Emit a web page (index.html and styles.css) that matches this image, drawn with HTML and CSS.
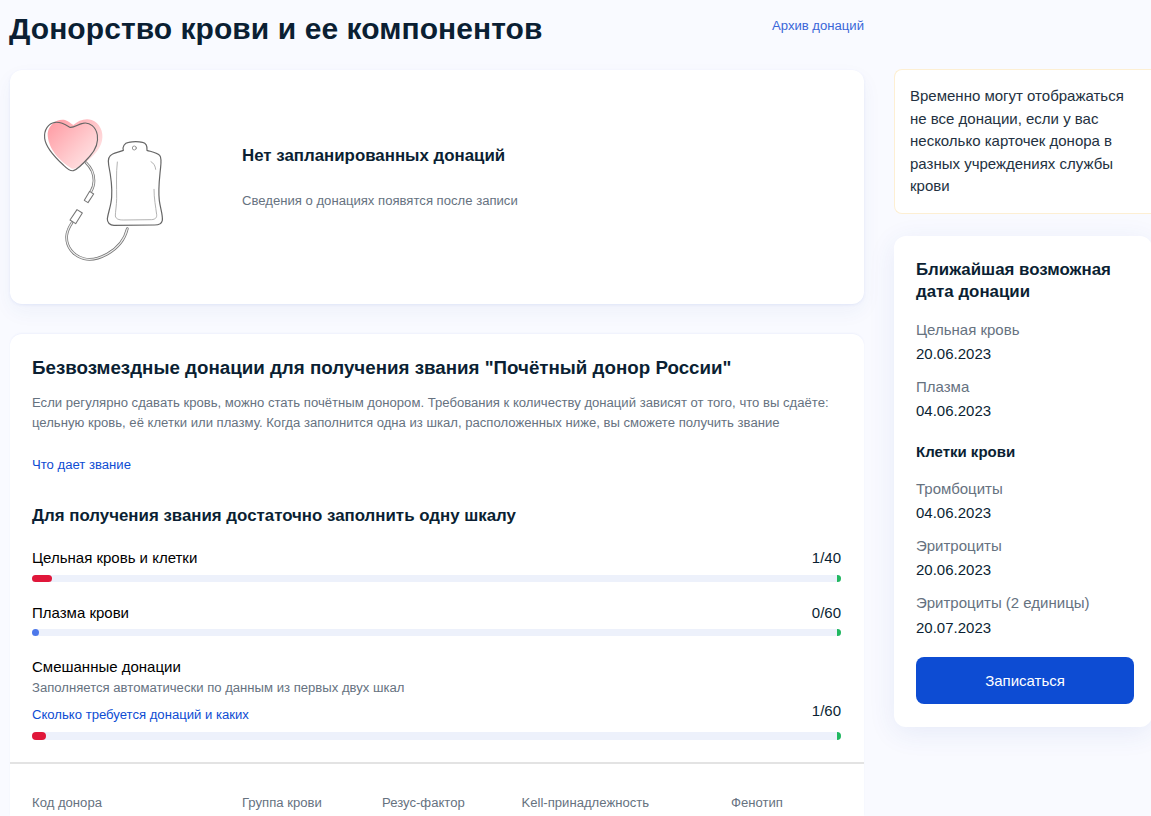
FILE: index.html
```html
<!DOCTYPE html>
<html lang="ru">
<head>
<meta charset="utf-8">
<title>Донорство крови и ее компонентов</title>
<link rel="stylesheet" href="styles.css">
</head>
<body>
<div class="page">
  <main class="main">
    <header class="head">
      <h1>Донорство крови и ее компонентов</h1>
      <a class="archive" href="#">Архив донаций</a>
    </header>
    <section class="card empty">
      <svg class="pic" width="200" height="220" viewBox="0 0 600 660" fill="none" stroke-linecap="round" stroke-linejoin="round">
        <defs>
          <linearGradient id="hg" x1="0.05" y1="0.1" x2="0.95" y2="0.9">
            <stop offset="0" stop-color="#ff9ea6"/>
            <stop offset="0.6" stop-color="#ffcdd0"/>
            <stop offset="1" stop-color="#ffe9ea"/>
          </linearGradient>
          <filter id="soft" x="-5%" y="-5%" width="110%" height="110%">
            <feGaussianBlur stdDeviation="0.9"/>
          </filter>
        </defs>
        <g filter="url(#soft)">
          <path d="M113 190C116 165 140 145 165 150C175 153 182 160 190 165C205 152 225 144 245 150C268 158 282 185 276 212C270 238 250 260 222 280C212 288 198 298 186 296C150 275 112 235 113 190Z" fill="url(#hg)"/>
          <path d="M180 172C170 166 155 155 135 157C115 160 101 180 104 205C107 230 135 262 160 285C170 295 178 304 190 302C205 298 222 278 240 258C256 240 266 220 262 195C258 172 240 155 218 160C203 163 192 174 180 172Z" stroke="#666" stroke-width="3.4"/>
          <path d="M228 278C243 292 252 310 252 332C252 346 247 358 241 368" stroke="#777" stroke-width="8"/>
          <path d="M228 278C243 292 252 310 252 332C252 346 247 358 241 368" stroke="#eee" stroke-width="3.5"/>
          <path d="M239 364L251 372L234 398L223 391Z" fill="#fff" stroke="#777" stroke-width="3.2"/>
          <path d="M352 476C344 510 322 535 292 552C270 564 245 572 222 566C190 558 168 530 170 498C171 484 178 470 186 458" stroke="#777" stroke-width="8"/>
          <path d="M352 476C344 510 322 535 292 552C270 564 245 572 222 566C190 558 168 530 170 498C171 484 178 470 186 458" stroke="#eee" stroke-width="3.5"/>
          <path d="M201 419L217 429L197 461L180 450Z" fill="#fff" stroke="#777" stroke-width="3.2"/>
          <path d="M340 241C337 230 343 219 356 217C370 214 385 214 398 217C408 219 412 228 411 241C424 245 440 247 449 256C456 264 453 282 451 300C448 330 444 360 448 392C451 415 459 435 457 451C455 462 446 465 434 465L312 466C300 466 291 458 292 446C295 425 304 405 305 380C307 350 302 315 296 285C293 268 296 257 308 252C318 248 330 245 340 241Z" stroke="#666" stroke-width="3.6"/>
          <path d="M322 276C318 310 320 350 320 385C320 405 316 425 316 438C318 447 326 450 340 450L425 449C436 448 441 443 440 434C437 410 432 385 432 358" stroke="#a0a0a0" stroke-width="2.4"/>
          <path d="M423 275C432 280 436 288 437 298" stroke="#a0a0a0" stroke-width="2.4"/>
          <circle cx="373" cy="234" r="6" stroke="#888" stroke-width="2.6"/>
        </g>
      </svg>
      <div class="empty-text">
        <h2>Нет запланированных донаций</h2>
        <p>Сведения о донациях появятся после записи</p>
      </div>
    </section>
    <section class="card honor">
      <div class="honor-body">
        <h2 class="honor-title">Безвозмездные донации для получения звания "Почётный донор России"</h2>
        <p class="honor-desc">Если регулярно сдавать кровь, можно стать почётным донором. Требования к количеству донаций зависят от того, что вы сдаёте: цельную кровь, её клетки или плазму. Когда заполнится одна из шкал, расположенных ниже, вы сможете получить звание</p>
        <a class="link what" href="#">Что дает звание</a>
        <h3 class="scale-title">Для получения звания достаточно заполнить одну шкалу</h3>
        <div class="scale">
          <div class="scale-head"><span>Цельная кровь и клетки</span><span>1/40</span></div>
          <div class="track"><i class="fill red w1"></i><i class="end"></i></div>
        </div>
        <div class="scale scale-plasma">
          <div class="scale-head"><span>Плазма крови</span><span>0/60</span></div>
          <div class="track"><i class="fill blue"></i><i class="end"></i></div>
        </div>
        <div class="scale scale-mixed">
          <div class="mixed-name">Смешанные донации</div>
          <div class="mixed-note">Заполняется автоматически по данным из первых двух шкал</div>
          <div class="scale-head mixed-head"><a class="link" href="#">Сколько требуется донаций и каких</a><span>1/60</span></div>
          <div class="track"><i class="fill red w2"></i><i class="end"></i></div>
        </div>
      </div>
      <div class="facts">
        <span class="f1">Код донора</span>
        <span class="f2">Группа крови</span>
        <span class="f3">Резус-фактор</span>
        <span class="f4">Kell-принадлежность</span>
        <span class="f5">Фенотип</span>
      </div>
    </section>
  </main>
  <aside class="side">
    <div class="notice">Временно могут отображаться не все донации, если у вас несколько карточек донора в разных учреждениях службы крови</div>
    <div class="next">
      <h3>Ближайшая возможная дата донации</h3>
      <dl>
        <dt>Цельная кровь</dt><dd>20.06.2023</dd>
        <dt>Плазма</dt><dd>04.06.2023</dd>
      </dl>
      <h4>Клетки крови</h4>
      <dl>
        <dt>Тромбоциты</dt><dd>04.06.2023</dd>
        <dt>Эритроциты</dt><dd>20.06.2023</dd>
        <dt>Эритроциты (2 единицы)</dt><dd class="last">20.07.2023</dd>
      </dl>
      <button class="btn">Записаться</button>
    </div>
  </aside>
</div>
</body>
</html>
```
FILE: styles.css
```css
html, body { margin: 0; padding: 0; }
body {
  height: 816px;
  overflow: hidden;
  background: #f9faff;
  font-family: "Liberation Sans", Arial, sans-serif;
  color: #0b1f33;
}
.page { display: flex; gap: 30px; padding-left: 10px; width: 1151px; box-sizing: border-box; }
.main { width: 854px; flex: none; }
.side { width: 258px; flex: none; padding-top: 69px; }
.head { display: flex; justify-content: space-between; height: 70px; }
h1 { margin: 11px 0 0 -1px; font-size: 30px; line-height: 36px; font-weight: 700; letter-spacing: .06px; color: #0b1f33; }
.archive { margin-top: 18px; font-size: 13.125px; line-height: 16px; color: #3a66d8; text-decoration: none; }
.card { background: #fff; border-radius: 12px; box-shadow: 0 1px 3px rgba(40, 80, 200, .08), 0 8px 20px rgba(40, 80, 160, .05); }
.empty { height: 234px; display: flex; }
.pic { flex: none; }
.empty-text { margin-left: 32px; padding-top: 76px; }
.empty-text h2 { margin: 0; font-size: 16.875px; line-height: 20px; font-weight: 700; }
.empty-text p { margin: 27px 0 0; font-size: 13.125px; line-height: 16px; color: #66727f; }
.honor { position: relative; margin-top: 30px; height: 482px; border-radius: 12px 12px 0 0; box-shadow: 0 -1px 2px rgba(40, 80, 200, .05); }
.honor-body { padding: 21px 23px 0 22px; height: 430px; box-sizing: border-box; border-bottom: 2px solid #e3e3e3; }
.honor-title { margin: 0; font-size: 18.75px; line-height: 26px; font-weight: 700; }
.honor-desc { margin: 12px 0 0; font-size: 13.125px; line-height: 19.7px; color: #66727f; }
.link { color: #0d4cd3; text-decoration: none; font-size: 13.125px; line-height: 16px; }
.what { display: block; margin-top: 25px; }
.scale-title { margin: 33px 0 0; font-size: 16.875px; line-height: 20px; font-weight: 700; }
.scale { margin-top: 23px; }
.scale-plasma { margin-top: 22px; }
.scale-mixed { margin-top: 22px; }
.scale-head { display: flex; justify-content: space-between; font-size: 15px; line-height: 18px; color: #0b1f33; }
.scale-head span:first-child { color: #000; }
.track { position: relative; height: 7px; margin-top: 8px; background: #edf1fb; border-radius: 4px; }
.scale-plasma .track { margin-top: 7px; }
.fill { position: absolute; left: 0; top: 0; height: 100%; border-radius: 4px; }
.red { background: #e0173a; }
.blue { width: 7px; background: #4d78ea; }
.w1 { width: 20px; }
.w2 { width: 14px; }
.end { position: absolute; right: 0; top: 0; width: 4px; height: 100%; background: #21b860; border-radius: 0 4px 4px 0; }
.mixed-name { font-size: 15px; line-height: 18px; color: #000; }
.mixed-note { margin-top: 4px; font-size: 13.125px; line-height: 16px; color: #66727f; }
.mixed-head { margin-top: 6px; align-items: flex-start; height: 23px; }
.mixed-head .link { margin-top: 5px; }
.scale-mixed .track { margin-top: 7px; height: 8px; }
.facts { display: flex; padding: 31px 0 0 22px; font-size: 13.125px; line-height: 16px; color: #66727f; }
.f1 { width: 210px; }
.f2 { width: 140px; }
.f3 { width: 139.5px; }
.f4 { width: 209.5px; }
.notice {
  box-sizing: border-box; height: 145px; padding: 15px 24px 0 15px;
  background: #fff; border: 1px solid #fdefd3; border-right: 0; border-radius: 8px 0 0 8px;
  font-size: 15px; line-height: 22.5px; color: #233141;
}
.next {
  box-sizing: border-box; margin-top: 22px; height: 491px; padding: 23px 18px 0 22px;
  background: #fff; border-radius: 12px; box-shadow: 0 6px 28px rgba(40, 80, 180, .09);
}
.next h3 { margin: 0; font-size: 16.875px; line-height: 22px; font-weight: 700; }
.next h4 { margin: 21px 0 0; font-size: 15px; line-height: 20px; font-weight: 700; }
dl { margin: 0; }
.next dt { margin-top: 13px; font-size: 15px; line-height: 20px; color: #66727f; }
.next dt:first-child { margin-top: 17px; }
.next dd { margin: 4px 0 0; font-size: 15px; line-height: 20px; color: #0b1f33; }
.next dd.last { margin-top: 5px; }
.btn {
  display: block; width: 218px; height: 47px; margin-top: 19px; border: 0; border-radius: 8px;
  background: #0d4cd3; color: #fff; font: 15px/20px "Liberation Sans", Arial, sans-serif;
}
```
